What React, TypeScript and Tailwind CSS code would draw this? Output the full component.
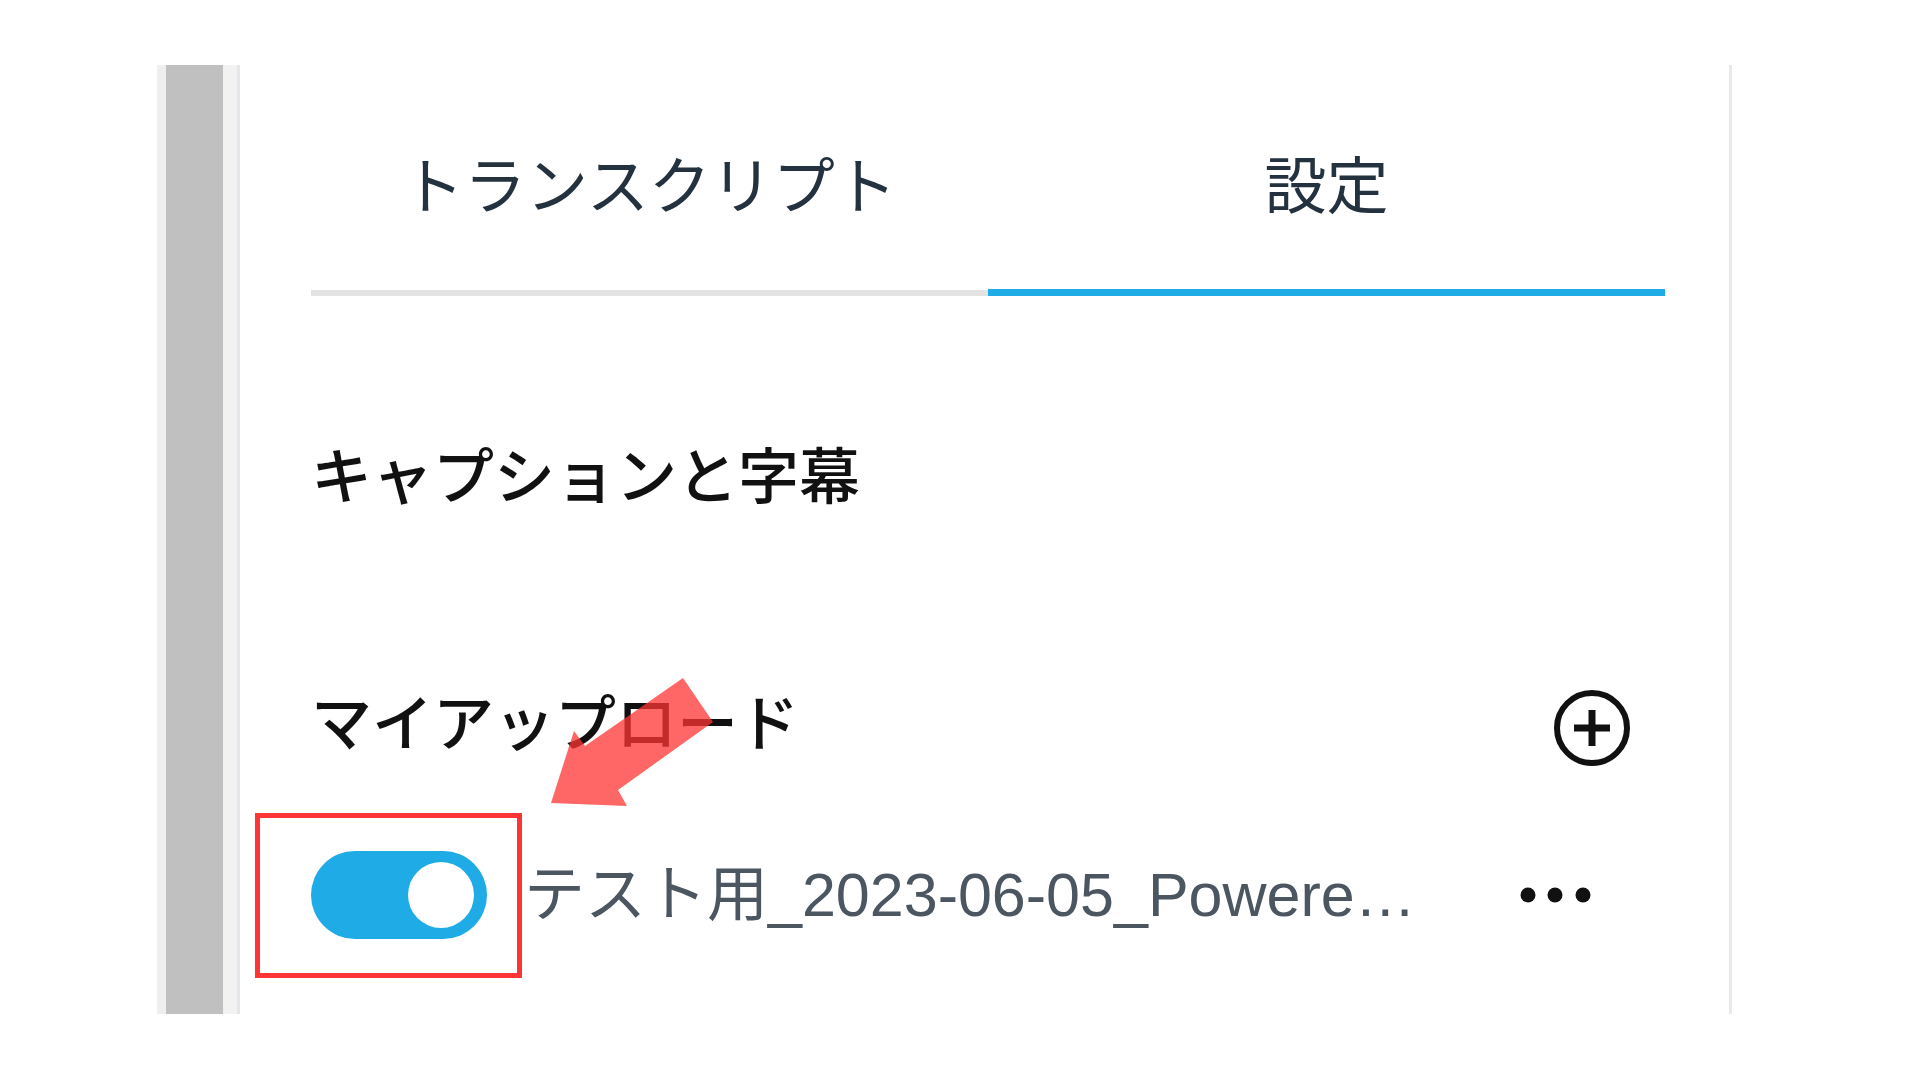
import React from "react";

export default function App() {
  return (
    <div className="relative w-[1920px] h-[1080px] bg-white overflow-hidden pt-[65px] pl-[157px] font-[Noto_Sans_CJK_JP,sans-serif]">
      <div className="flex h-[949px]">
        <div className="w-[9px] bg-[#efefef]" />
        <div className="w-[57px] bg-[#c0c0c0]" />
        <div className="w-[14px] bg-[#f2f2f2]" />
        <div className="w-[3px] bg-[#e3e7eb]" />
        <div className="w-[1492px] border-r-[3px] border-[#e6eaee] pl-[71px] pr-[64px] flex flex-col">
          {/* Tabs */}
          <div className="flex items-end">
            <div className="flex-1 flex flex-col items-center">
              <span className="mt-[86px] text-[62px] leading-none text-[#23323e]">トランスクリプト</span>
              <div className="mt-[77px] h-[6px] w-full bg-[#e3e3e3]" />
            </div>
            <div className="flex-1 flex flex-col items-center">
              <span className="mt-[86px] text-[62px] leading-none text-[#23323e]">設定</span>
              <div className="mt-[76px] h-[7px] w-full bg-[#1eabe6]" />
            </div>
          </div>

          {/* Captions heading */}
          <div className="mt-[146px] text-[61px] leading-none font-medium text-[#111111]">キャプションと字幕</div>

          {/* My uploads */}
          <div className="mt-[186px] flex items-start justify-between">
            <span className="text-[61px] leading-none font-medium text-[#111111]">マイアップロード</span>
            <svg className="w-[80px] h-[80px] mr-[33px]" viewBox="0 0 80 80">
              <circle cx="40" cy="39" r="35" fill="none" stroke="#111111" strokeWidth="6" />
              <line x1="22" y1="39" x2="58" y2="39" stroke="#111111" strokeWidth="7" />
              <line x1="40" y1="21" x2="40" y2="57" stroke="#111111" strokeWidth="7" />
            </svg>
          </div>

          {/* Upload item */}
          <div className="mt-[82px] flex items-center h-[88px]">
            <div className="w-[176px] h-[88px] shrink-0 rounded-full bg-[#1eabe6] flex items-center justify-end pr-[13px]">
              <div className="w-[66px] h-[66px] rounded-full bg-white" />
            </div>
            <span className="ml-[37px] flex-1 whitespace-nowrap text-[61px] leading-none text-[#4b5661] font-[Liberation_Sans,Noto_Sans_CJK_JP,sans-serif]">
              テスト用_2023-06-05_Powere…
            </span>
            <svg className="w-[72px] h-[16px] mr-[73px]" viewBox="0 0 72 16">
              <circle cx="8" cy="8" r="7.5" fill="#111111" />
              <circle cx="35" cy="8" r="7.5" fill="#111111" />
              <circle cx="63" cy="8" r="7.5" fill="#111111" />
            </svg>
          </div>
        </div>
      </div>

      {/* Annotation: red box */}
      <div className="absolute left-[255px] top-[813px] w-[267px] h-[165px] border-[5px] border-[#ff3535]" />

      {/* Annotation: arrow */}
      <svg className="absolute left-[540px] top-[670px] w-[200px] h-[150px]" viewBox="0 0 200 150">
        <polygon
          points="143,8 173,52 78,120 87,136 11,133 34,61 45,76"
          fill="#ff3333"
          fillOpacity="0.75"
        />
      </svg>
    </div>
  );
}
